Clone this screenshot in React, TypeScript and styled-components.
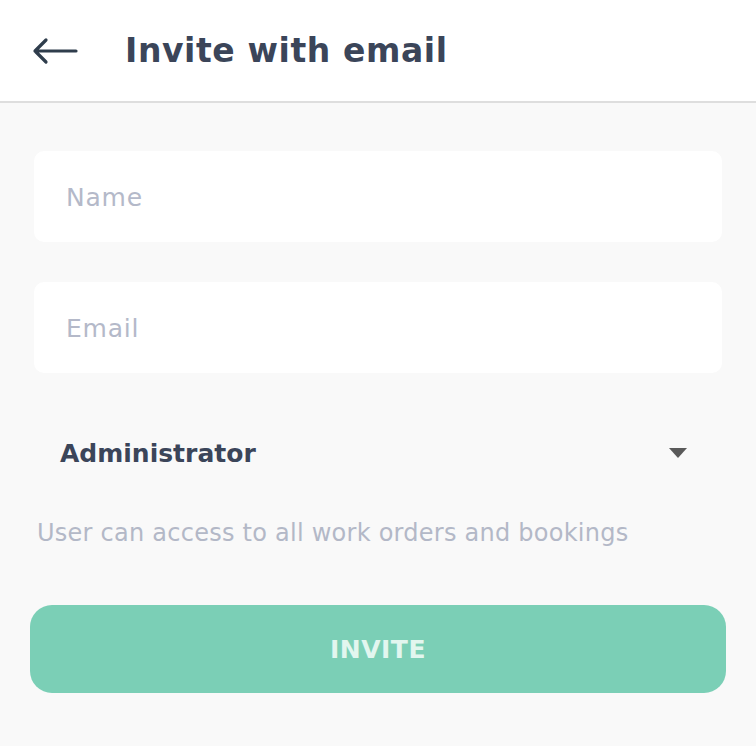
import styled, { createGlobalStyle } from "styled-components";

const GlobalStyle = createGlobalStyle`
  html, body {
    margin: 0;
    padding: 0;
    background: #f9f9f9;
  }
  body {
    font-family: "DejaVu Sans", "Open Sans", sans-serif;
  }
`;

const Page = styled.div`
  width: 756px;
  min-height: 746px;
  background: #f9f9f9;
`;

const Header = styled.header`
  display: flex;
  align-items: center;
  height: 103px;
  background: #ffffff;
  border-bottom: 2px solid #dedede;
  box-sizing: border-box;
  padding-left: 32px;
`;

const BackButton = styled.button`
  display: flex;
  align-items: center;
  background: none;
  border: none;
  padding: 0;
  margin-right: 47px;
  color: #2f3d4c;
  cursor: pointer;
`;

const Title = styled.h1`
  margin: 0;
  font-size: 33px;
  font-weight: 700;
  color: #3b4559;
  letter-spacing: 0.6px;
`;

const Body = styled.main`
  display: flex;
  flex-direction: column;
  padding: 48px 34px 0 34px;
`;

const Field = styled.input`
  height: 91px;
  box-sizing: border-box;
  border: none;
  border-radius: 10px;
  background: #ffffff;
  padding: 2px 32px 0 32px;
  margin-bottom: 40px;
  font-family: inherit;
  font-size: 25px;
  letter-spacing: 0.8px;
  color: #3b4559;
  outline: none;

  &::placeholder {
    color: #b4b9c9;
  }
`;

const RoleSelect = styled.div`
  display: flex;
  align-items: center;
  justify-content: space-between;
  height: 80px;
  padding: 0 35px 0 26px;
  cursor: pointer;
`;

const RoleLabel = styled.span`
  font-size: 25px;
  font-weight: 600;
  color: #3b4559;
`;

const Caret = styled.span`
  width: 0;
  height: 0;
  border-left: 9px solid transparent;
  border-right: 9px solid transparent;
  border-top: 10px solid #5a5a5a;
`;

const Hint = styled.p`
  margin: 26px 0 0 3px;
  font-size: 24px;
  font-weight: 400;
  letter-spacing: 0.25px;
  color: #b3b8c7;
`;

const InviteButton = styled.button`
  margin: 58px -4px 0 -4px;
  height: 88px;
  border: none;
  border-radius: 22px;
  background: #7bcfb6;
  color: #e2f6ef;
  font-family: inherit;
  font-size: 25px;
  font-weight: 700;
  letter-spacing: 0.5px;
  cursor: pointer;
`;

const ArrowIcon = () => (
  <svg width="46" height="28" viewBox="0 0 46 28" fill="none">
    <path
      d="M44 14H3M14 3L3 14l11 11"
      stroke="currentColor"
      strokeWidth="3.2"
      strokeLinecap="round"
      strokeLinejoin="round"
    />
  </svg>
);

export default function App() {
  return (
    <Page>
      <GlobalStyle />
      <Header>
        <BackButton aria-label="Back">
          <ArrowIcon />
        </BackButton>
        <Title>Invite with email</Title>
      </Header>
      <Body>
        <Field placeholder="Name" />
        <Field placeholder="Email" />
        <RoleSelect>
          <RoleLabel>Administrator</RoleLabel>
          <Caret />
        </RoleSelect>
        <Hint>User can access to all work orders and bookings</Hint>
        <InviteButton>INVITE</InviteButton>
      </Body>
    </Page>
  );
}
